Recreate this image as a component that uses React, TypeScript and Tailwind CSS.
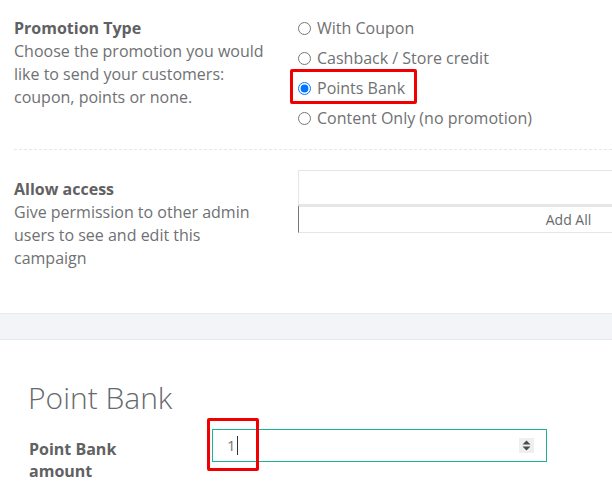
import { useState } from 'react';

const PROMO_OPTIONS = [
  'With Coupon',
  'Cashback / Store credit',
  'Points Bank',
  'Content Only (no promotion)',
];

function Spinner() {
  return (
    <div className="w-[15px] h-[15px] bg-[#efefef] flex items-center justify-center">
      <svg width="9" height="11" viewBox="0 0 9 11">
        <path d="M4.5 0.5 L8.5 4.5 L0.5 4.5 Z" fill="#4a4a4a" />
        <path d="M0.5 6.5 L8.5 6.5 L4.5 10.5 Z" fill="#4a4a4a" />
      </svg>
    </div>
  );
}

export default function App() {
  const [promo, setPromo] = useState('Points Bank');

  return (
    <div className="w-[612px] h-[490px] overflow-hidden bg-white text-[#6f7173] font-['Open_Sans',sans-serif] text-[16px] leading-[23px]">
      {/* promotion type */}
      <div className="ml-[14px] flex pb-[16px] border-b border-dashed border-[#e4e6e8]">
        <div className="w-[284px] shrink-0 pt-[17px] pr-[28px]">
          <p className="font-bold text-[#5f6163]">Promotion Type</p>
          <p>Choose the promotion you would like to send your customers: coupon, points or none.</p>
        </div>
        <div className="pt-[13px] flex flex-col">
          {PROMO_OPTIONS.map((opt) => (
            <label key={opt} className="relative h-[30px] flex items-center gap-[6px] cursor-pointer">
              <input
                type="radio"
                name="promo"
                className="m-0 w-[13px] h-[13px]"
                checked={promo === opt}
                onChange={() => setPromo(opt)}
              />
              <span className="whitespace-nowrap">{opt}</span>
              {opt === 'Points Bank' && (
                <span className="absolute -left-[8px] -top-[4px] w-[127px] h-[35px] border-[3px] border-[#f00000] rounded-[2px]" />
              )}
            </label>
          ))}
        </div>
      </div>

      {/* allow access */}
      <div className="ml-[14px] flex h-[163px]">
        <div className="w-[284px] shrink-0 pt-[28px] pr-[28px]">
          <p className="font-bold text-[#5f6163]">Allow access</p>
          <p>Give permission to other admin users to see and edit this campaign</p>
        </div>
        <div className="pt-[20px] shrink-0">
          <div className="w-[540px]">
            <div className="h-[35px] border border-[#e5e6e7]" />
            <button className="w-full h-[28px] border-t-2 border-t-[#e5e6e7] border-b border-b-[#e5e6e7] border-l border-l-[#777] text-[14px] text-[#676a6c] text-center leading-[26px]">
              Add All
            </button>
          </div>
        </div>
      </div>

      <div className="h-[27px] bg-[#f3f4f8] border-y border-[#e7eaec]" />

      {/* point bank */}
      <div className="pl-[28px] pt-[41px]">
        <h2 className="text-[30px] leading-[33px] font-light text-[#676a6c]">Point Bank</h2>
        <div className="mt-[15px] flex">
          <div className="w-[184px] shrink-0 pt-[9px] pl-[1px] pr-[50px]">
            <p className="font-bold text-[#5f6163] leading-[22px]">Point Bank amount</p>
          </div>
          <div className="relative w-[335px] shrink-0 h-[33px] border border-[#1ab394] flex items-center pl-[14px] pr-[12px]">
            <span className="text-[#777] text-[15px]">1</span>
            <span className="ml-[1px] w-px h-[19px] bg-[#333]" />
            <span className="ml-auto">
              <Spinner />
            </span>
            <span className="absolute -left-[6px] -top-[12px] w-[52px] h-[53px] border-[3px] border-[#f00000] rounded-[2px]" />
          </div>
        </div>
      </div>
    </div>
  );
}
